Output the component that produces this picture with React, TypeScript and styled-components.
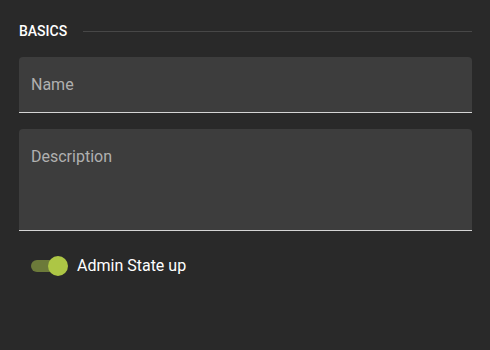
import React from 'react';
import styled, { createGlobalStyle } from 'styled-components';

const Global = createGlobalStyle`
  html, body {
    margin: 0;
    padding: 0;
    background: #292929;
  }
  body {
    font-family: Roboto, "Liberation Sans", sans-serif;
  }
`;

const Page = styled.div`
  width: 490px;
  height: 350px;
  box-sizing: border-box;
  padding: 22px 18px 0 19px;
  background: #292929;
  display: flex;
  flex-direction: column;
`;

const SectionHead = styled.div`
  display: flex;
  align-items: center;
  gap: 16px;
  height: 18px;
`;

const SectionTitle = styled.span`
  color: #ffffff;
  font-size: 14px;
  font-weight: 500;
  text-transform: uppercase;
`;

const Rule = styled.div`
  flex: 1;
  height: 1px;
  background: #474747;
`;

interface FieldProps {
  tall?: boolean;
}

const Field = styled.div<FieldProps>`
  height: ${p => (p.tall ? '102px' : '56px')};
  background: #3d3d3d;
  border-radius: 4px 4px 0 0;
  border-bottom: 1px solid #d4d4d4;
  box-sizing: border-box;
  display: flex;
  align-items: ${p => (p.tall ? 'flex-start' : 'center')};
  padding: ${p => (p.tall ? '18px 12px 0' : '0 12px')};
  color: #b0b0b0;
  font-size: 16px;
  margin-top: ${p => (p.tall ? '16px' : '17px')};
`;

const ToggleRow = styled.div`
  display: flex;
  align-items: center;
  gap: 10px;
  margin-top: 25px;
  padding-left: 12px;
`;

const Track = styled.div`
  position: relative;
  width: 36px;
  height: 12px;
  border-radius: 6px;
  background: #6c7a3a;
`;

const Thumb = styled.span`
  position: absolute;
  right: -1px;
  top: -4px;
  width: 20px;
  height: 20px;
  border-radius: 50%;
  background: #adc645;
`;

const ToggleLabel = styled.span`
  color: #ffffff;
  font-size: 16px;
`;

export default function App() {
  return (
    <>
      <Global />
      <Page>
        <SectionHead>
          <SectionTitle>Basics</SectionTitle>
          <Rule />
        </SectionHead>
        <Field>Name</Field>
        <Field tall>Description</Field>
        <ToggleRow>
          <Track>
            <Thumb />
          </Track>
          <ToggleLabel>Admin State up</ToggleLabel>
        </ToggleRow>
      </Page>
    </>
  );
}
